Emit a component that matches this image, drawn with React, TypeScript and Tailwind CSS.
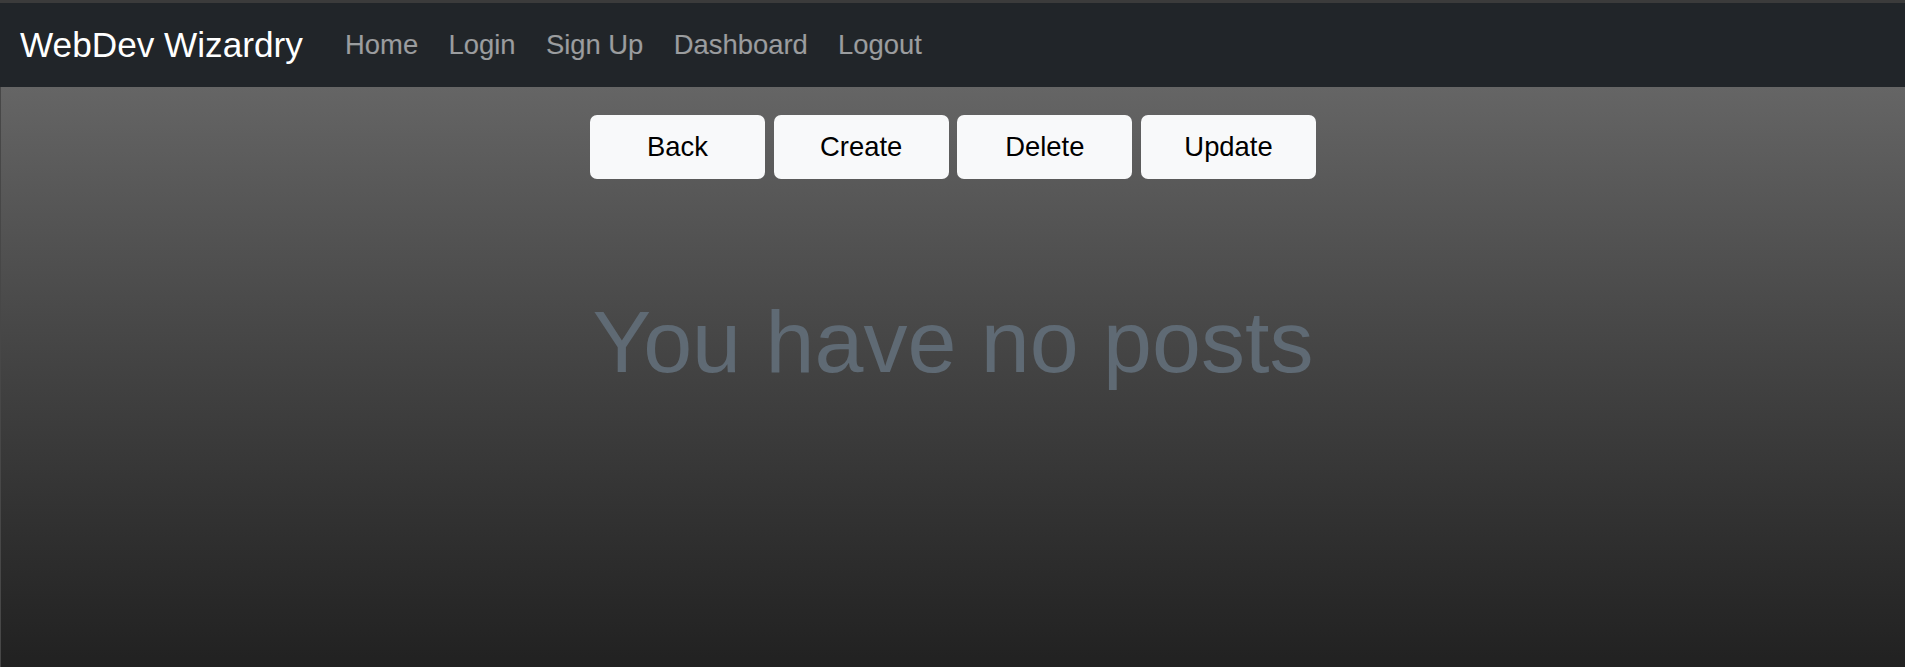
import React from "react";

export default function App() {
  const links = ["Home", "Login", "Sign Up", "Dashboard", "Logout"];
  const buttons = ["Back", "Create", "Delete", "Update"];
  return (
    <div
      className="min-h-[667px] w-full flex flex-col bg-[#3b3b3b] pt-[3px]"
      style={{ fontFamily: '"Liberation Sans", Arial, sans-serif' }}
    >
      <nav className="h-[84px] bg-[#212529] flex items-center pl-[20px]">
        <span className="text-white text-[35.2px] leading-none mr-[27px]">WebDev Wizardry</span>
        <div className="flex items-center">
          {links.map((l) => (
            <a key={l} className="px-[15.2px] text-[27.4px] leading-none text-white/55">
              {l}
            </a>
          ))}
        </div>
      </nav>
      <main className="flex-1 flex flex-col items-center border-l border-[#474747] bg-gradient-to-b from-[#656565] to-[#212121]">
        <div className="mt-[28px] flex gap-[8.7px]">
          {buttons.map((b) => (
            <button
              key={b}
              className="w-[175px] h-[64px] rounded-[7px] bg-[#f8f9fa] text-black text-[27.4px] leading-none flex items-center justify-center"
            >
              {b}
            </button>
          ))}
        </div>
        <h1 className="mt-[110px] text-[88px] leading-[1.2] text-[#5f6a74]">You have no posts</h1>
      </main>
    </div>
  );
}
